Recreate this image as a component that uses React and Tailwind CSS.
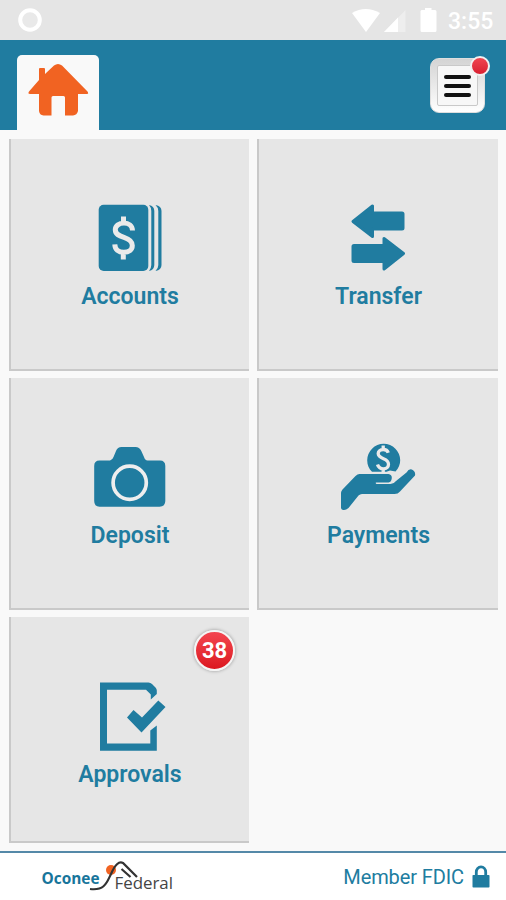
import React from "react";

const AccountsIcon = () => (
  <svg viewBox="0 0 120 85" className="w-[120px] h-[85px]" fill="#207ca0">
    <rect x="28.7" y="14.7" width="49.6" height="66.3" rx="5" />
    <path d="M79 15q5.300 1 5.300 6v54q0 5-5.300 6q2.300-2.500 2.300-6V21q0-3.500-2.300-6Z" />
    <path d="M85.500 15q6 1 6 6v54q0 5-6 6q2.800-2.500 2.800-6V21q0-3.500-2.800-6Z" />
    <path
      d="M62.500 40.500C62.300 35.700 58.500 33 54 33C48.700 33 45.300 36.200 45.300 39.800C45.300 44.300 49 45.800 54 47.400C59.500 49.200 62.300 51.300 62.300 55.500C62.300 59.800 59 62.300 53.800 62.300C48.500 62.300 45 59.500 44.800 54.300M53.500 26.500V33M53.300 62V69.500"
      fill="none"
      stroke="#eaeaea"
      strokeWidth="5"
    />
  </svg>
);

const TransferIcon = () => (
  <svg
    viewBox="-0.500 0 120 85"
    className="w-[120px] h-[85px]"
    fill="#207ca0"
    stroke="#207ca0"
    strokeWidth="3"
    strokeLinejoin="round"
  >
    <path d="M33.500 31.500L53 16V23H82.500Q83.500 23 83.500 24V38Q83.500 39 82.500 39H53V46.500Z" />
    <path d="M84 63.500L64.500 48.500V55.500H34.500Q33.500 55.500 33.500 56.500V70.500Q33.500 71.500 34.500 71.500H64.500V79Z" />
  </svg>
);

const DepositIcon = () => (
  <svg viewBox="0.500 -6 120 85" className="w-[120px] h-[85px]" fill="#207ca0">
    <path d="M30 25.500H40.500Q43 25 44 22L46.500 16Q48 12 52 12H66Q70 12 71.800 16L74.500 22Q75.500 25.300 78 25.500H90.500Q95.800 25.500 95.800 31V66Q95.800 71.700 90 71.700H30Q24.700 71.700 24.700 66V31Q24.700 25.500 30 25.500Z" />
    <circle cx="60.200" cy="47.700" r="16.600" fill="none" stroke="#eeeeee" strokeWidth="3.700" />
  </svg>
);

const PaymentsIcon = () => (
  <svg viewBox="-0.500 -6 120 85" className="w-[120px] h-[85px]" fill="#207ca0">
    <path d="M52.500 36.700C49.500 34 47.700 30 47.700 25.300A16.500 16.500 0 0 1 80.700 25.300C80.700 29.500 79 33.500 76 36.500L70.500 35.500L67 36.700Z" />
    <path
      d="M68.800 17.800C68 15.500 66 14.500 63.700 14.500C60.700 14.500 58.700 16.200 58.700 18.600C58.700 21.300 61 22.500 64 23.700C67.300 25 69 26.600 69 29.300C69 32 67 33.800 64 33.800C61 33.800 58.800 32.300 58 29.500M63.700 10.500V14.500M63.700 33.500V38"
      fill="none"
      stroke="#eaeaea"
      strokeWidth="3.300"
    />
    <path d="M40 39H69Q72.500 39.800 72.300 43Q72 47 69 47.500H56.500Q55.700 48.300 57 49H71Q74.300 49 76.500 46L87 37.500Q89 34 91.500 34.200Q96.500 36 95.500 40.500L80.500 56.500Q78.500 59 75 59H42.500Q40.500 59 39 60.500L29 73Q25.500 76 22.500 74.500Q21.500 74 21.500 72.500V58Q21.500 56 23 54.500L36 41Q38 39 40 39Z" />
  </svg>
);

const ApprovalsIcon = () => (
  <svg viewBox="0.500 -2 120 85" className="w-[120px] h-[85px]" fill="#207ca0">
    <path d="M30.500 12.500H79Q81 12.500 82.500 14L86 17.500Q87.300 19 87.300 20.500V24L81.300 29.500V24.500L76.500 19.700H37.500V73.500H80.800V60.500L87.300 55.500V80.700H30.500Z" />
    <path d="M57.500 47.500L64 40L72.500 47.500L88.800 30.500L96 37L72 62.500Z" />
  </svg>
);

const tiles = [
  { name: "Accounts", Icon: AccountsIcon },
  { name: "Transfer", Icon: TransferIcon },
  { name: "Deposit", Icon: DepositIcon },
  { name: "Payments", Icon: PaymentsIcon },
  { name: "Approvals", Icon: ApprovalsIcon, badge: 38 },
];

function StatusBar() {
  return (
    <div className="h-10 shrink-0 bg-[#e5e5e5] flex items-center justify-between pl-[18px] pr-[13px]">
      <svg viewBox="0 0 24 24" className="w-6 h-6">
        <circle cx="12" cy="12" r="9.800" fill="#e9e9e9" stroke="#fff" strokeWidth="4" />
      </svg>
      <div className="flex items-center">
        <svg viewBox="0 0 86 28" className="w-[86px] h-7" fill="#fff">
          <path d="M0 7Q13.500-1 28 7L14 26Z" />
          <path d="M53.500 4V26H32Z" opacity="0.350" />
          <path d="M46 11.500V26H32Z" />
          <path d="M69.500 4H73V2H79.500V4H83Q84.500 4 84.500 5.500V24.500Q84.500 26 83 26H70Q68.500 26 68.500 24.500V5Z" />
        </svg>
        <span className="ml-[10px] mt-[3px] w-[45px] text-[23px] leading-7 font-medium text-white whitespace-nowrap">3:55</span>
      </div>
    </div>
  );
}

function Header() {
  return (
    <div className="h-[90px] shrink-0 bg-[#207ca0] flex items-start justify-between pl-[17px] pr-[21px]">
      <div className="mt-[15px] w-[82px] h-[75px] rounded-t-[5px] bg-[#f9f9f9]">
        <svg viewBox="17 55 82 75" className="w-[82px] h-[75px]" fill="#f16322">
          <path d="M39 80V69Q39 68 40 68H44Q45 68 45 69V74L54 65.500Q58 62.300 62 65.500L87.500 91.500Q89 94 87 94H78V111Q77 115 73 115.500H65V97.500Q65 96 63.500 96H53Q51.500 96 51.500 97.500V115.500H43.500Q39.500 115 39 111V94H30Q27.500 94 29 91.500Z" />
        </svg>
      </div>
      <div className="relative mt-[18px] w-[55px] h-[55px] rounded-[9px] bg-linear-to-b from-[#d4d4d4] to-[#ffffff] border border-[#dedede] p-[6px]">
        <div className="w-full h-full rounded-[2px] border border-[#c9c9c9] bg-[#f7f7f7] flex flex-col items-center justify-center gap-[5px] pt-px">
          <div className="w-[27px] h-1 rounded-full bg-[#111111]" />
          <div className="w-[27px] h-1 rounded-full bg-[#111111]" />
          <div className="w-[27px] h-1 rounded-full bg-[#111111]" />
        </div>
        <div className="absolute -top-[3px] -right-[6px] w-5 h-5 rounded-full border-2 border-[#f1f1f1] bg-linear-to-b from-[#f04450] to-[#d91f31]" />
      </div>
    </div>
  );
}

function Tile({ tile }) {
  const { name, Icon, badge } = tile;
  return (
    <div className="relative bg-[#e6e6e6] border-l-2 border-b-2 border-[#c9c9c9] pt-[51px] flex flex-col items-center">
      <Icon />
      <div className="mt-2 text-[23px] leading-[27px] font-semibold text-[#207ca0]">{name}</div>
      {badge && (
        <div className="absolute top-[13px] right-[14px] w-[41px] h-[41px] rounded-full border-2 border-[#f5f5f5] bg-linear-to-b from-[#f3444f] to-[#dc151e] shadow-[0_0_3px_1px_#b5b5b5] flex items-center justify-center text-[22px] font-bold text-white">
          {badge}
        </div>
      )}
    </div>
  );
}

function Footer() {
  return (
    <div className="h-[49px] shrink-0 bg-white border-t-2 border-[#5489a8] flex justify-between pl-10 pr-4">
      <svg viewBox="40 853 140 47" className="w-[140px] h-[47px]">
        <circle cx="111" cy="870" r="5" fill="#f16322" />
        <path
          d="M90 889C105 891 107 882 111 874Q117 860 123 863L137 877M121.500 869L130.500 877"
          fill="none"
          stroke="#333333"
          strokeWidth="2.200"
        />
        <text x="41.500" y="884" fontFamily="Open Sans, sans-serif" fontSize="16.500" fontWeight="700" fill="#17759b" textLength="58" lengthAdjust="spacingAndGlyphs">
          Oconee
        </text>
        <text x="114.500" y="888.500" fontFamily="Open Sans, sans-serif" fontSize="16" fill="#444444" textLength="58.500" lengthAdjust="spacingAndGlyphs">
          Federal
        </text>
      </svg>
      <div className="flex items-center gap-2 text-[20px] text-[#207ca0] tracking-[-0.100px]">
        <span>Member FDIC</span>
        <svg viewBox="0 0 18 23" className="w-[18px] h-[23px] -mt-px">
          <path d="M4.300 12V7a4.700 5.200 0 0 1 9.400 0V12" fill="none" stroke="#207ca0" strokeWidth="2.800" />
          <rect x="0.500" y="10" width="17" height="12.500" rx="0.800" fill="#207ca0" />
        </svg>
      </div>
    </div>
  );
}

export default function App() {
  return (
    <div className="w-[506px] h-[900px] flex flex-col overflow-hidden bg-[#f9f9f9] font-['Roboto',sans-serif]">
      <StatusBar />
      <Header />
      <div className="flex-1 grid grid-cols-[240px_241px] grid-rows-[232px_232px_226px] gap-x-2 gap-y-[7px] pt-[9px] pl-[9px]">
        {tiles.map((tile) => (
          <Tile key={tile.name} tile={tile} />
        ))}
      </div>
      <Footer />
    </div>
  );
}
